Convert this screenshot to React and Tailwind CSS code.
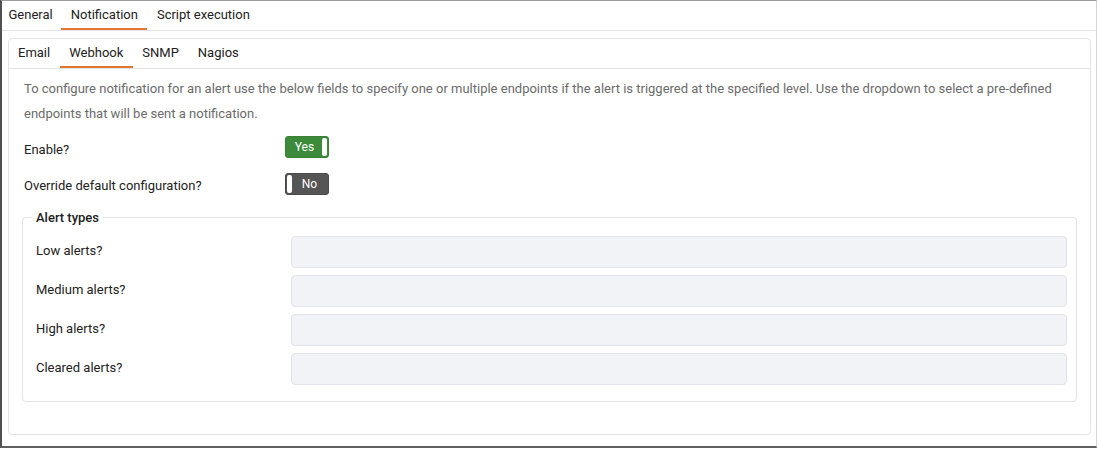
import React, { useState } from 'react';

const TOP_TABS = ['General', 'Notification', 'Script execution'];
const SUB_TABS = ['Email', 'Webhook', 'SNMP', 'Nagios'];
const ALERTS = ['Low alerts?', 'Medium alerts?', 'High alerts?', 'Cleared alerts?'];

function Toggle({ on }) {
  return (
    <div
      className={`flex items-stretch w-[44px] h-[22px] rounded-[3px] border p-[1px] ${
        on ? 'bg-[#3d8b3a] border-[#3a8037]' : 'bg-[#555555] border-[#4a4a4a] flex-row-reverse'
      }`}
    >
      <div className="flex-1 flex items-center justify-center text-[12px] text-white">
        {on ? 'Yes' : 'No'}
      </div>
      <div className="w-[5px] bg-white rounded-[2px]" />
    </div>
  );
}

export default function App() {
  const [top, setTop] = useState('Notification');
  const [sub, setSub] = useState('Webhook');

  return (
    <div className="w-[1097px] h-[448px] bg-white border-t border-t-[#9c9c9c] border-l-2 border-l-[#505050] border-r border-r-[#d4d4d8] border-b-2 border-b-[#606060] font-['Roboto',sans-serif] text-[13px] text-[#222]">
      {/* Top tabs */}
      <div className="flex h-[30px] border-b border-[#e3e4e8]">
        <div className="flex -ml-[3px] h-full">
          {TOP_TABS.map((t) => (
            <button
              key={t}
              onClick={() => setTop(t)}
              className={`px-[9.5px] first:pr-[8.5px] h-full flex items-center border-b-2 -mb-[1px] ${
                top === t ? 'border-[#e5762f]' : 'border-transparent'
              }`}
            >
              {t}
            </button>
          ))}
        </div>
      </div>

      {/* Card */}
      <div className="mt-[7px] ml-[6px] mr-[5px] h-[397px] border border-[#e3e4e8] rounded-[4px]">
        <div className="flex h-[30px] border-b border-[#e3e4e8]">
          <div className="flex -ml-[0.5px] h-full">
            {SUB_TABS.map((t) => (
              <button
                key={t}
                onClick={() => setSub(t)}
                className={`px-[9.5px] h-full flex items-center border-b-2 -mb-[1px] ${
                  sub === t ? 'border-[#e5762f]' : 'border-transparent'
                }`}
              >
                {t}
              </button>
            ))}
          </div>
        </div>

        <div className="px-[13px] pt-[7px]">
          <p className="pl-[2px] text-[#6b6b6b] leading-[25px]">
            To configure notification for an alert use the below fields to specify one or multiple endpoints if the alert is triggered at the specified level. Use the dropdown to select a pre-defined endpoints that will be sent a notification.
          </p>

          <div className="flex items-center pl-[2px] mt-[10px] h-[22px]">
            <div className="w-[261px] pt-[5px]">Enable?</div>
            <Toggle on />
          </div>
          <div className="flex items-center pl-[2px] mt-[15px] h-[22px]">
            <div className="w-[261px] pt-[3px]">Override default configuration?</div>
            <Toggle on={false} />
          </div>

          <fieldset className="mt-[13px] border border-[#e3e4e8] rounded-[4px] pl-[13px] pr-[9px] pb-[16px]">
            <legend className="px-[4px] -ml-[4px] font-medium text-[#222]">Alert types</legend>
            <div className="flex flex-col gap-[7px] mt-[8px]">
              {ALERTS.map((a) => (
                <div key={a} className="flex items-center">
                  <div className="w-[255px] pb-[1px]">{a}</div>
                  <div className="flex-1 h-[32px] bg-[#f2f3f6] border border-[#e2e4e9] rounded-[4px]" />
                </div>
              ))}
            </div>
          </fieldset>
        </div>
      </div>
    </div>
  );
}
